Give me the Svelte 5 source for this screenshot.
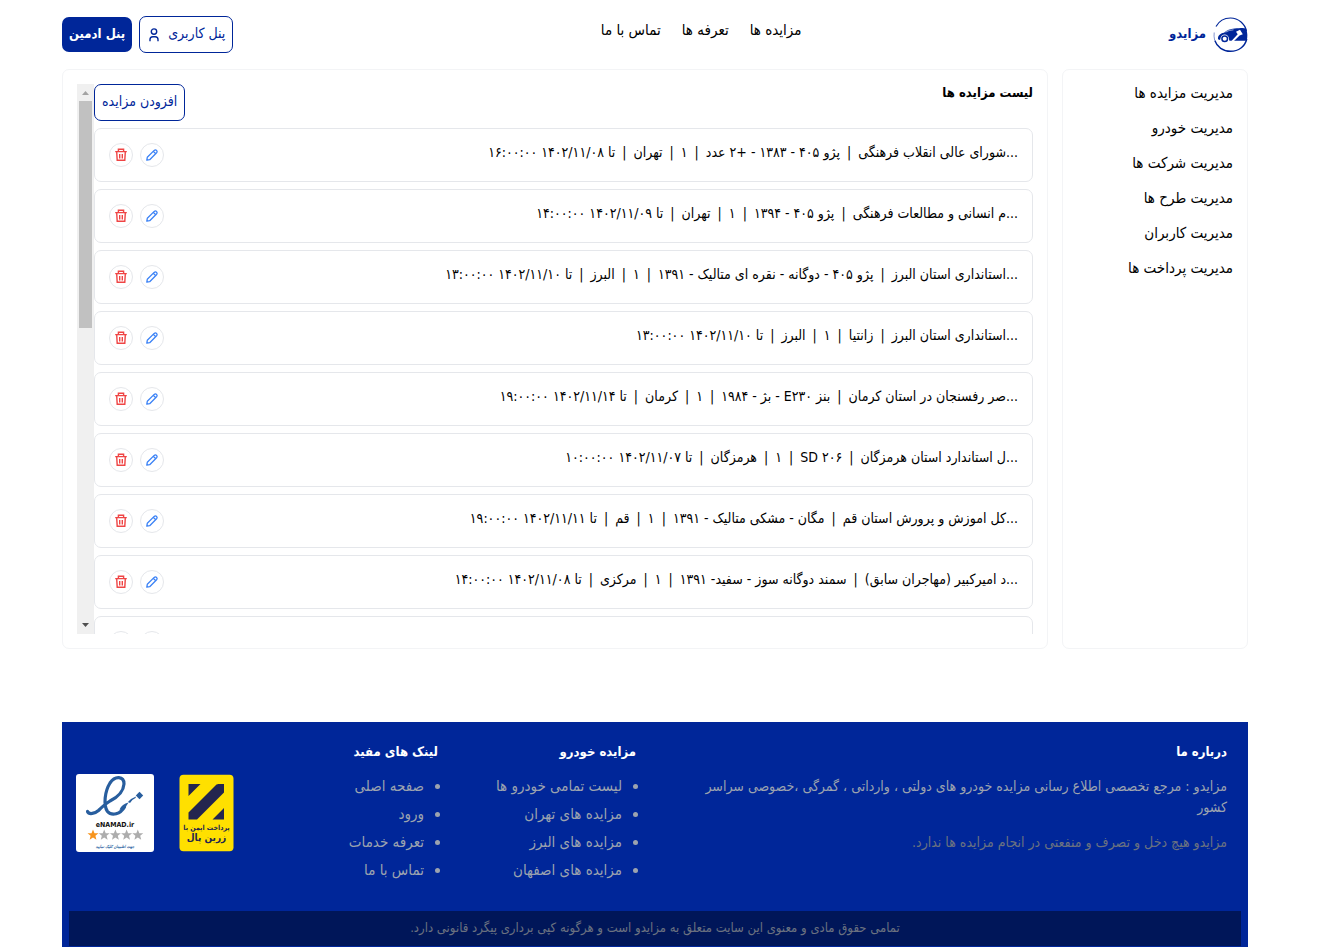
<script>
  const menu = ['مدیریت مزایده ها', 'مدیریت خودرو', 'مدیریت شرکت ها', 'مدیریت طرح ها', 'مدیریت کاربران', 'مدیریت پرداخت ها'];
  const nav = ['مزایده ها', 'تعرفه ها', 'تماس با ما'];
  const auctions = [
    ['...شورای عالی انقلاب فرهنگی', 'پژو ۴۰۵ - ۱۳۸۳ - +۲ عدد', '۱', 'تهران', 'تا ۱۴۰۲/۱۱/۰۸ ۱۶:۰۰:۰۰'],
    ['...م انسانی و مطالعات فرهنگی', 'پژو ۴۰۵ - ۱۳۹۴', '۱', 'تهران', 'تا ۱۴۰۲/۱۱/۰۹ ۱۴:۰۰:۰۰'],
    ['...استانداری استان البرز', 'پژو ۴۰۵ - دوگانه - نقره ای متالیک - ۱۳۹۱', '۱', 'البرز', 'تا ۱۴۰۲/۱۱/۱۰ ۱۳:۰۰:۰۰'],
    ['...استانداری استان البرز', 'زانتیا', '۱', 'البرز', 'تا ۱۴۰۲/۱۱/۱۰ ۱۳:۰۰:۰۰'],
    ['...صر رفسنجان در استان کرمان', 'بنز E۲۳۰ - بژ - ۱۹۸۴', '۱', 'کرمان', 'تا ۱۴۰۲/۱۱/۱۴ ۱۹:۰۰:۰۰'],
    ['...ل استاندارد استان هرمزگان', '۲۰۶ SD', '۱', 'هرمزگان', 'تا ۱۴۰۲/۱۱/۰۷ ۱۰:۰۰:۰۰'],
    ['...کل اموزش و پرورش استان قم', 'مگان - مشکی متالیک - ۱۳۹۱', '۱', 'قم', 'تا ۱۴۰۲/۱۱/۱۱ ۱۹:۰۰:۰۰'],
    ['...د امیرکبیر (مهاجران سابق)', 'سمند دوگانه سوز - سفید- ۱۳۹۱', '۱', 'مرکزی', 'تا ۱۴۰۲/۱۱/۰۸ ۱۴:۰۰:۰۰'],
    []
  ];
  const carLinks = ['لیست تمامی خودرو ها', 'مزایده های تهران', 'مزایده های البرز', 'مزایده های اصفهان'];
  const usefulLinks = ['صفحه اصلی', 'ورود', 'تعرفه خدمات', 'تماس با ما'];
  const star = 'M0-5.6 1.5-1.8 5.5-1.7 2.4.8 3.4 4.7 0 2.5-3.4 4.7-2.4.8-5.5-1.7-1.5-1.8Z';
</script>

<div class="page" dir="rtl" lang="fa">
  <header>
    <a class="brand" href="#home">
      <svg width="35" height="36" viewBox="0 0 35 36" aria-hidden="true">
        <path d="M3 9.500C6 4 11 1 17.500 1A16.600 16.600 0 0 1 33.500 14" fill="none" stroke="#002699" stroke-width="1.200" />
        <path d="M33.800 22C32 29.500 25.500 34.300 17.500 34.300 10 34.300 4 30 1.800 23.500" fill="none" stroke="#002699" stroke-width="1.400" />
        <path d="M1.200 15.500Q.700 19 1.600 23" fill="none" stroke="#8495ce" stroke-width="1" />
        <path d="M5 22.300C4.700 18.500 7 16.500 11 15.700 14 13.200 17 11.800 21.500 11.500 27 11 31 10.500 33 11.500 34.800 15.500 34.600 20.500 33.700 23.800H16.500A5 5 0 0 0 7 23Z" fill="#002699" />
        <path d="M12.500 15.200Q16 12.900 20.500 12.800" fill="none" stroke="#fff" stroke-width=".600" />
        <circle cx="11.700" cy="21.700" r="4.200" fill="#fff" />
        <circle cx="11.700" cy="21.700" r="2.800" fill="none" stroke="#002699" stroke-width="1.500" />
        <path d="M23 14.800 27 12.800 29.800 17.300 26.600 18.600 20.500 24.500H18L24.700 17.200Z" fill="#fff" />
      </svg>
      <span>مزایدو</span>
    </a>
    <nav>
      {#each nav as item}<a href="#nav">{item}</a>{/each}
    </nav>
    <div class="account">
      <button class="outline">
        <span>پنل کاربری</span>
        <svg width="14" height="14" viewBox="0 0 14 14" fill="none" stroke="#002699" stroke-width="1.400" aria-hidden="true"><circle cx="7" cy="3.600" r="2.700" /><path d="M3 13.300V11.500Q3 8.700 5.800 8.700H8.200Q11 8.700 11 11.500V13.300" /></svg>
      </button>
      <button class="solid">پنل ادمین</button>
    </div>
  </header>

  <div class="content">
    <aside>
      {#each menu as item}<a href="#menu">{item}</a>{/each}
    </aside>
    <main>
      <div class="list">
        <div class="list-head">
          <h1>لیست مزایده ها</h1>
          <button class="outline">افزودن مزایده</button>
        </div>
        {#each auctions as row}
          <article>
            <p>
              {#each row as part, i}{#if i > 0}<i>|</i>{/if}<span>{part}</span>{/each}
            </p>
            <div class="actions">
              <button class="round" aria-label="ویرایش">
                <svg width="14" height="14" viewBox="0 0 14 14" fill="none" stroke="#3b82f6" stroke-width="1.300" stroke-linejoin="round" aria-hidden="true"><path d="M1.800 12.200 2.300 9.300 9.200 2.400Q10.400 1.300 11.600 2.400 12.700 3.600 11.600 4.800L4.700 11.700ZM8.300 3.300 10.700 5.700" /></svg>
              </button>
              <button class="round" aria-label="حذف">
                <svg width="14" height="14" viewBox="0 0 14 14" fill="none" stroke="#ef4444" stroke-width="1.400" aria-hidden="true"><path d="M1.200 3.600H12.800M4.400 3.500V1.300H9.600V3.500M2.700 3.700 3.200 12.200H10.800L11.300 3.700M5.700 6V10.400M8.300 6V10.400" /></svg>
              </button>
            </div>
          </article>
        {/each}
      </div>
      <div class="scrollbar" aria-hidden="true">
        <svg width="17" height="17" viewBox="0 0 17 17"><path d="M5 11 8.500 7 12 11Z" fill="#a3a3a3" /></svg>
        <div class="track"><div class="thumb"></div></div>
        <svg width="17" height="17" viewBox="0 0 17 17"><path d="M5 6 8.500 10 12 6Z" fill="#505050" /></svg>
      </div>
    </main>
  </div>

  <footer>
    <div class="columns">
      <section class="about">
        <h2>درباره ما</h2>
        <p>مزایدو : مرجع تخصصی اطلاع رسانی مزایده خودرو های دولتی ، وارداتی ، گمرگی ،خصوصی سراسر کشور</p>
        <p class="dim">مزایدو هیچ دخل و تصرف و منفعتی در انجام مزایده ها ندارد.</p>
      </section>
      <section class="links">
        <h2>مزایده خودرو</h2>
        <ul>{#each carLinks as item}<li><a href="#cars">{item}</a></li>{/each}</ul>
      </section>
      <section class="links">
        <h2>لینک های مفید</h2>
        <ul>{#each usefulLinks as item}<li><a href="#links">{item}</a></li>{/each}</ul>
      </section>
      <section class="badges">
        <svg width="55" height="78" viewBox="0 0 55 78" role="img" aria-label="زرین پال">
          <rect x=".500" y=".800" width="54" height="76.500" rx="4" fill="#ffe000" />
          <path d="M9.500 10H21.500L9.500 22ZM37.500 10.500Q38.500 10 39.500 10H45V18.500L18 45.500H9.500V38.500ZM45 34V45.500H33.500Z" fill="#23254f" />
          <text x="27.500" y="56" font-size="7" font-weight="700" text-anchor="middle" fill="#23254f">پرداخت ایمن با</text>
          <text x="27.500" y="67" font-size="10" font-weight="700" text-anchor="middle" fill="#23254f">زرین پال</text>
        </svg>
        <svg width="78" height="78" viewBox="0 0 78 78" role="img" aria-label="eNAMAD.ir">
          <rect width="78" height="78" rx="3" fill="#fff" />
          <path d="M11.500 37.500C13 41 19 39.500 22.500 36.500 26 33 29 30 34 27 42 23 47.500 17 48 10 48 2 39 1.500 34 9 29 17 27 31 31.500 37.500 36 42.500 44.500 40 48.500 33" fill="none" stroke="#285e9e" stroke-width="3.200" stroke-linecap="round" />
          <path d="M43.500 35.500Q46 30 52.500 28.500L50 32.500Q47 36.500 43.500 35.500ZM52 28Q55.500 24 60 22.500L59.500 24Q56 25.500 54 29Z" fill="#285e9e" />
          <path d="M63.500 17.800 67.200 21.500 63.500 25.200 59.800 21.500Z" fill="#285e9e" />
          <text x="39" y="52.500" font-size="7" font-weight="700" text-anchor="middle" fill="#111">eNAMAD.ir</text>
          {#each [0, 1, 2, 3, 4] as n}
            <path d={star} transform={`translate(${17 + n * 11.2} 61)`} fill={n === 0 ? '#f7941d' : '#adadad'} />
          {/each}
          <text x="39" y="74" font-size="4" font-weight="700" font-style="italic" text-anchor="middle" fill="#285e9e">جهت اطمینان کلیک نمایید</text>
        </svg>
      </section>
    </div>
    <p class="copyright">تمامی حقوق مادی و معنوی این سایت متعلق به مزایدو است و هرگونه کپی برداری پیگرد قانونی دارد.</p>
  </footer>
</div>

<style>
  :global(body) { margin: 0; background: #fff; }
  * { box-sizing: border-box; }
  .page {
    padding: 0 87px 0 62px;
    font: 14px/21px "DejaVu Sans Condensed", "DejaVu Sans", sans-serif;
    color: #000;
  }
  a { color: inherit; text-decoration: none; }
  h1, h2, p, ul { margin: 0; padding: 0; }
  h1, h2 { font-size: 13px; line-height: 21px; font-weight: 700; }
  h1 { line-height: 18px; }
  button { font: inherit; cursor: pointer; }
  header {
    display: flex;
    justify-content: space-between;
    align-items: center;
    height: 69px;
  }
  .brand { display: flex; align-items: center; gap: 7px; color: #002699; font-size: 13px; font-weight: 700; }
  .brand span { padding-bottom: 2px; }
  nav { display: flex; gap: 21px; padding-bottom: 8px; font-size: 15px; }
  .account { display: flex; align-items: center; gap: 7px; }
  .outline, .solid {
    display: flex;
    align-items: center;
    gap: 7px;
    height: 37px;
    padding: 0 7px 3px;
    border: 1px solid #002699;
    border-radius: 7px;
    background: #fff;
    color: #002699;
    white-space: nowrap;
  }
  .outline svg { margin-top: 3px; }
  .solid { height: 35px; border: 0; background: #002699; color: #fff; font-size: 13px; font-weight: 700; }
  .content { display: flex; gap: 14px; }
  aside, main { border: 1px solid #f3f4f6; border-radius: 7px; }
  aside {
    flex: 0 0 186px;
    display: flex;
    flex-direction: column;
    gap: 14px;
    padding: 13px 14px;
    font-size: 15px;
  }
  main { flex: 1; min-width: 0; display: flex; padding: 14px; }
  .list {
    flex: 1;
    min-width: 0;
    height: 550px;
    overflow: hidden;
    display: flex;
    flex-direction: column;
    gap: 7px;
  }
  .list-head { flex: none; display: flex; justify-content: space-between; align-items: flex-start; }
  article {
    flex: none;
    display: flex;
    justify-content: space-between;
    align-items: center;
    height: 54px;
    padding: 0 14px;
    border: 1px solid #e5e7eb;
    border-radius: 7px;
  }
  article p { padding-bottom: 5px; white-space: nowrap; }
  article span { display: inline-block; }
  article i { margin: 0 7px; font-style: normal; }
  .actions { display: flex; gap: 7px; }
  .round {
    display: grid;
    place-items: center;
    width: 24px;
    height: 24px;
    padding: 0;
    border: 1px solid #e5e7eb;
    border-radius: 50%;
    background: #fff;
  }
  .scrollbar { display: flex; flex-direction: column; width: 17px; background: #f0f0f0; }
  .track { flex: 1; padding: 0 2px; }
  .thumb { height: 44%; background: #c1c1c1; }
  footer { margin-top: 73px; padding: 0 7px 1px; background: #002699; color: #fff; }
  .columns { display: flex; height: 189px; padding: 19px 14px 0 7px; }
  .about { flex: 1; }
  .about p { margin-top: 14px; padding-left: 56px; color: #9ca3af; }
  .about .dim { color: #6b7280; }
  .links { flex: 0 0 198px; color: #9ca3af; font-size: 15px; }
  .links h2 { color: #fff; }
  ul { margin-top: 14px; padding-right: 14px; }
  li { margin-bottom: 7px; }
  .badges { flex: 0 0 164px; display: flex; justify-content: flex-end; gap: 25px; padding-top: 33px; }
  .badges svg { flex: none; }
  .copyright { padding: 6px 0 8px; background: #001659; color: #6b7280; font-size: 13px; text-align: center; }
</style>
